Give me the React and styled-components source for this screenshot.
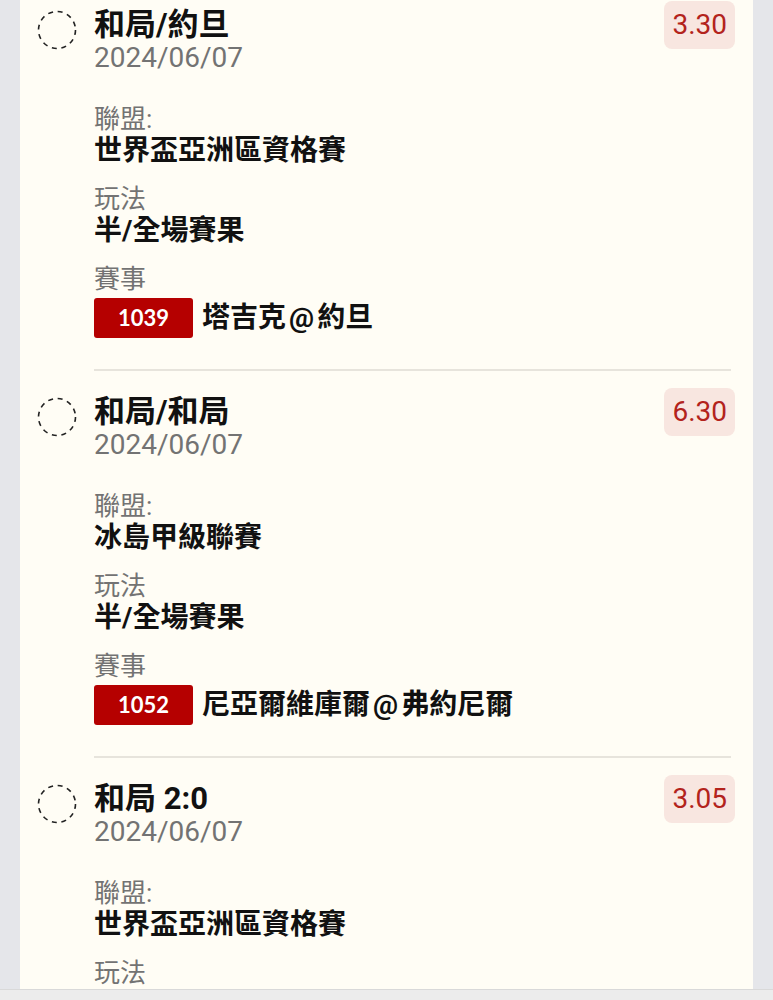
import React from "react";
import styled, { createGlobalStyle } from "styled-components";

const GlobalStyle = createGlobalStyle`
  html, body {
    margin: 0;
    padding: 0;
    background: #e5e6ea;
  }
  body {
    font-family: Roboto, "Noto Sans CJK TC", sans-serif;
    color: #111;
  }
`;

const Card = styled.div`
  margin: -16px 20px 0 20px;
  background: #fffdf5;
  padding: 0 18px 40px 0;
`;

const Item = styled.div`
  display: flex;
  padding-top: 17px;
`;

const Marker = styled.div`
  width: 40px;
  height: 40px;
  flex-shrink: 0;
  margin: 9px 17px 0 17px;
`;

const Body = styled.div`
  flex: 1;
  display: flex;
  flex-direction: column;
`;

const Head = styled.div`
  display: flex;
  justify-content: space-between;
  align-items: flex-start;
`;

const Title = styled.div`
  margin-top: 7px;
  font-size: 31px;
  line-height: 34px;
  font-weight: 700;
`;

const DateText = styled.div`
  font-size: 28px;
  line-height: 32px;
  color: #737373;
`;

const Odds = styled.div`
  height: 48px;
  line-height: 48px;
  padding: 0 8px;
  border-radius: 8px;
  background: #f8e6e0;
  color: #b3231c;
  font-size: 28px;
`;

const Fields = styled.div`
  margin-top: 29px;
  display: flex;
  flex-direction: column;
  gap: 16px;
`;

const Label = styled.div`
  font-size: 26px;
  line-height: 32px;
  color: #737373;
`;

const Value = styled.div`
  font-size: 28px;
  line-height: 32px;
  font-weight: 700;
`;

const At = styled.span`
  margin: 0 3px;
`;

const MatchRow = styled.div`
  margin-top: 3px;
  display: flex;
  align-items: center;
  gap: 9px;
`;

const MatchNo = styled.span`
  width: 99px;
  height: 40px;
  line-height: 40px;
  text-align: center;
  border-radius: 3px;
  background: #b50000;
  color: #fff;
  font-family: Lato, sans-serif;
  font-weight: 700;
  font-size: 22px;
`;

const Separator = styled.div`
  margin: 31px 4px 0 0;
  height: 2px;
  background: #e7e4dc;
`;

const BottomBar = styled.div`
  position: fixed;
  left: 0;
  right: 0;
  bottom: 0;
  height: 10px;
  background: #ececec;
  border-top: 1px solid #d9d9d9;
`;

const DashedCircle = () => (
  <svg width="40" height="40" viewBox="0 0 40 40">
    <circle
      cx="20"
      cy="20"
      r="18.5"
      fill="none"
      stroke="#222"
      strokeWidth="1.6"
      strokeDasharray="5 4.7"
    />
  </svg>
);

const bets = [
  {
    pick: "和局/約旦",
    date: "2024/06/07",
    odds: "3.30",
    league: "世界盃亞洲區資格賽",
    type: "半/全場賽果",
    no: "1039",
    home: "塔吉克",
    away: "約旦",
  },
  {
    pick: "和局/和局",
    date: "2024/06/07",
    odds: "6.30",
    league: "冰島甲級聯賽",
    type: "半/全場賽果",
    no: "1052",
    home: "尼亞爾維庫爾",
    away: "弗約尼爾",
  },
  {
    pick: "和局 2:0",
    date: "2024/06/07",
    odds: "3.05",
    league: "世界盃亞洲區資格賽",
    type: "波膽",
    no: "1039",
    home: "塔吉克",
    away: "約旦",
  },
];

export default function App() {
  return (
    <>
      <GlobalStyle />
      <Card>
        {bets.map((b, i) => (
          <Item key={i}>
            <Marker>
              <DashedCircle />
            </Marker>
            <Body>
              <Head>
                <div>
                  <Title>{b.pick}</Title>
                  <DateText>{b.date}</DateText>
                </div>
                <Odds>{b.odds}</Odds>
              </Head>
              <Fields>
                <div>
                  <Label>聯盟:</Label>
                  <Value>{b.league}</Value>
                </div>
                <div>
                  <Label>玩法</Label>
                  <Value>{b.type}</Value>
                </div>
                <div>
                  <Label>賽事</Label>
                  <MatchRow>
                    <MatchNo>{b.no}</MatchNo>
                    <Value>
                      {b.home}
                      <At>@</At>
                      {b.away}
                    </Value>
                  </MatchRow>
                </div>
              </Fields>
              <Separator />
            </Body>
          </Item>
        ))}
      </Card>
      <BottomBar />
    </>
  );
}
